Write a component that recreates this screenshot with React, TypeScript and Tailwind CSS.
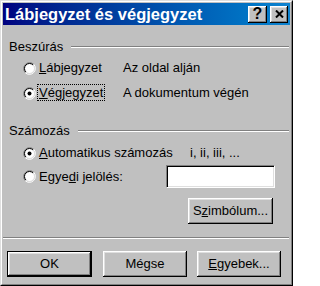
const raised =
  "shadow-[inset_-1px_-1px_0_#000,inset_1px_1px_0_#fff,inset_-2px_-2px_0_#808080,inset_2px_2px_0_#dfdfdf]";

const Radio = ({ checked }: { checked?: boolean }) => (
  <svg width="13" height="13" viewBox="0 0 13 13" className="shrink-0">
    <circle cx="6.5" cy="6.5" r="5" fill="#fff" />
    <path d="M2.26 10.74 A6 6 0 0 1 10.74 2.26" fill="none" stroke="#808080" strokeWidth="1" />
    <path d="M2.96 10.04 A5 5 0 0 1 10.04 2.96" fill="none" stroke="#000" strokeWidth="1" />
    <path d="M10.74 2.26 A6 6 0 0 1 2.26 10.74" fill="none" stroke="#fff" strokeWidth="1" />
    <path d="M10.04 2.96 A5 5 0 0 1 2.96 10.04" fill="none" stroke="#dfdfdf" strokeWidth="1" />
    {checked && <circle cx="6.5" cy="6.5" r="2" fill="#000" />}
  </svg>
);

const GroupLabel = ({ children }: { children: string }) => (
  <div className="flex items-center h-[14px]">
    <span>{children}</span>
    <div className="flex-1 ml-[8px] border-t border-t-[#808080] border-b border-b-white" />
  </div>
);

const Button = ({
  children,
  width,
  isDefault,
}: {
  children: React.ReactNode;
  width: string;
  isDefault?: boolean;
}) => (
  <div
    className={`${width} h-[26px] flex items-center justify-center bg-[#c0c0c0] ${
      isDefault ? "border border-black" : ""
    } ${raised}`}
  >
    {children}
  </div>
);

export default function App() {
  return (
    <div
      className="w-[293px] h-[286px] bg-[#c0c0c0] text-[13px] text-black border border-t-[#dfdfdf] border-l-[#dfdfdf] border-r-black border-b-black"
      style={{ fontFamily: '"Liberation Sans", Arial, sans-serif' }}
    >
      <div className="h-full border border-t-white border-l-white border-r-[#808080] border-b-[#808080] p-[1px] flex flex-col">
        {/* title bar */}
        <div className="h-[22px] flex items-center bg-linear-to-r from-[#000080] to-[#1084d0] pl-[2px] pr-[2px]">
          <span className="flex-1 text-white font-bold text-[16.5px] leading-none">
            Lábjegyzet és végjegyzet
          </span>
          <div className={`w-[19px] h-[17px] bg-[#c0c0c0] flex items-center justify-center ${raised}`}>
            <span className="font-bold text-[16px] leading-none -mt-[1px]">?</span>
          </div>
          <div className={`ml-[3px] w-[18px] h-[17px] bg-[#c0c0c0] flex items-center justify-center ${raised}`}>
            <svg width="9" height="8" viewBox="0 0 9 8">
              <path d="M1 0.5 L8 7.5 M8 0.5 L1 7.5" stroke="#000" strokeWidth="2" />
            </svg>
          </div>
        </div>

        {/* body */}
        <div className="flex flex-col pl-[6px] pr-[1px] pt-[15px]">
          <GroupLabel>Beszúrás</GroupLabel>
          <div className="mt-[4px] h-[20px] flex items-center pl-[14px]">
            <Radio />
            <span className="ml-[1px] w-[86px] border border-transparent pl-[1px]">
              <u>L</u>ábjegyzet
            </span>
            <span>Az oldal alján</span>
          </div>
          <div className="mt-[5px] h-[20px] flex items-center pl-[14px]">
            <Radio checked />
            <span className="ml-[1px] w-[86px]">
              <span className="border border-dotted border-black pl-[1px] pr-[1px]">
                <u>V</u>égjegyzet
              </span>
            </span>
            <span>A dokumentum végén</span>
          </div>

          <div className="mt-[21px]">
            <GroupLabel>Számozás</GroupLabel>
          </div>
          <div className="mt-[5px] h-[20px] flex items-center pl-[14px]">
            <Radio checked />
            <span className="ml-[1px] w-[153px] border border-transparent pl-[1px]">
              <u>A</u>utomatikus számozás
            </span>
            <span>i, ii, iii, ...</span>
          </div>
          <div className="mt-[2px] h-[23px] flex items-center pl-[14px]">
            <Radio />
            <span className="ml-[1px] w-[129px] border border-transparent pl-[1px]">
              Egye<u>d</u>i jelölés:
            </span>
            <div className="w-[109px] h-[23px] bg-white border border-t-[#808080] border-l-[#808080] border-r-white border-b-white shadow-[inset_1px_1px_0_#000,inset_-1px_-1px_0_#dfdfdf]" />
          </div>
          <div className="mt-[10px] pl-[179px]">
            <Button width="w-[85px]">
              S<u>z</u>imbólum...
            </Button>
          </div>
        </div>

        <div className="mt-[13px] mr-[1px] border-t border-t-[#808080] border-b border-b-white" />

        <div className="mt-[12px] flex pl-[4px]">
          <Button width="w-[85px]" isDefault>
            OK
          </Button>
          <div className="ml-[11px]">
            <Button width="w-[84px]">Mégse</Button>
          </div>
          <div className="ml-[10px]">
            <Button width="w-[84px]">
              <u>E</u>gyebek...
            </Button>
          </div>
        </div>
      </div>
    </div>
  );
}
